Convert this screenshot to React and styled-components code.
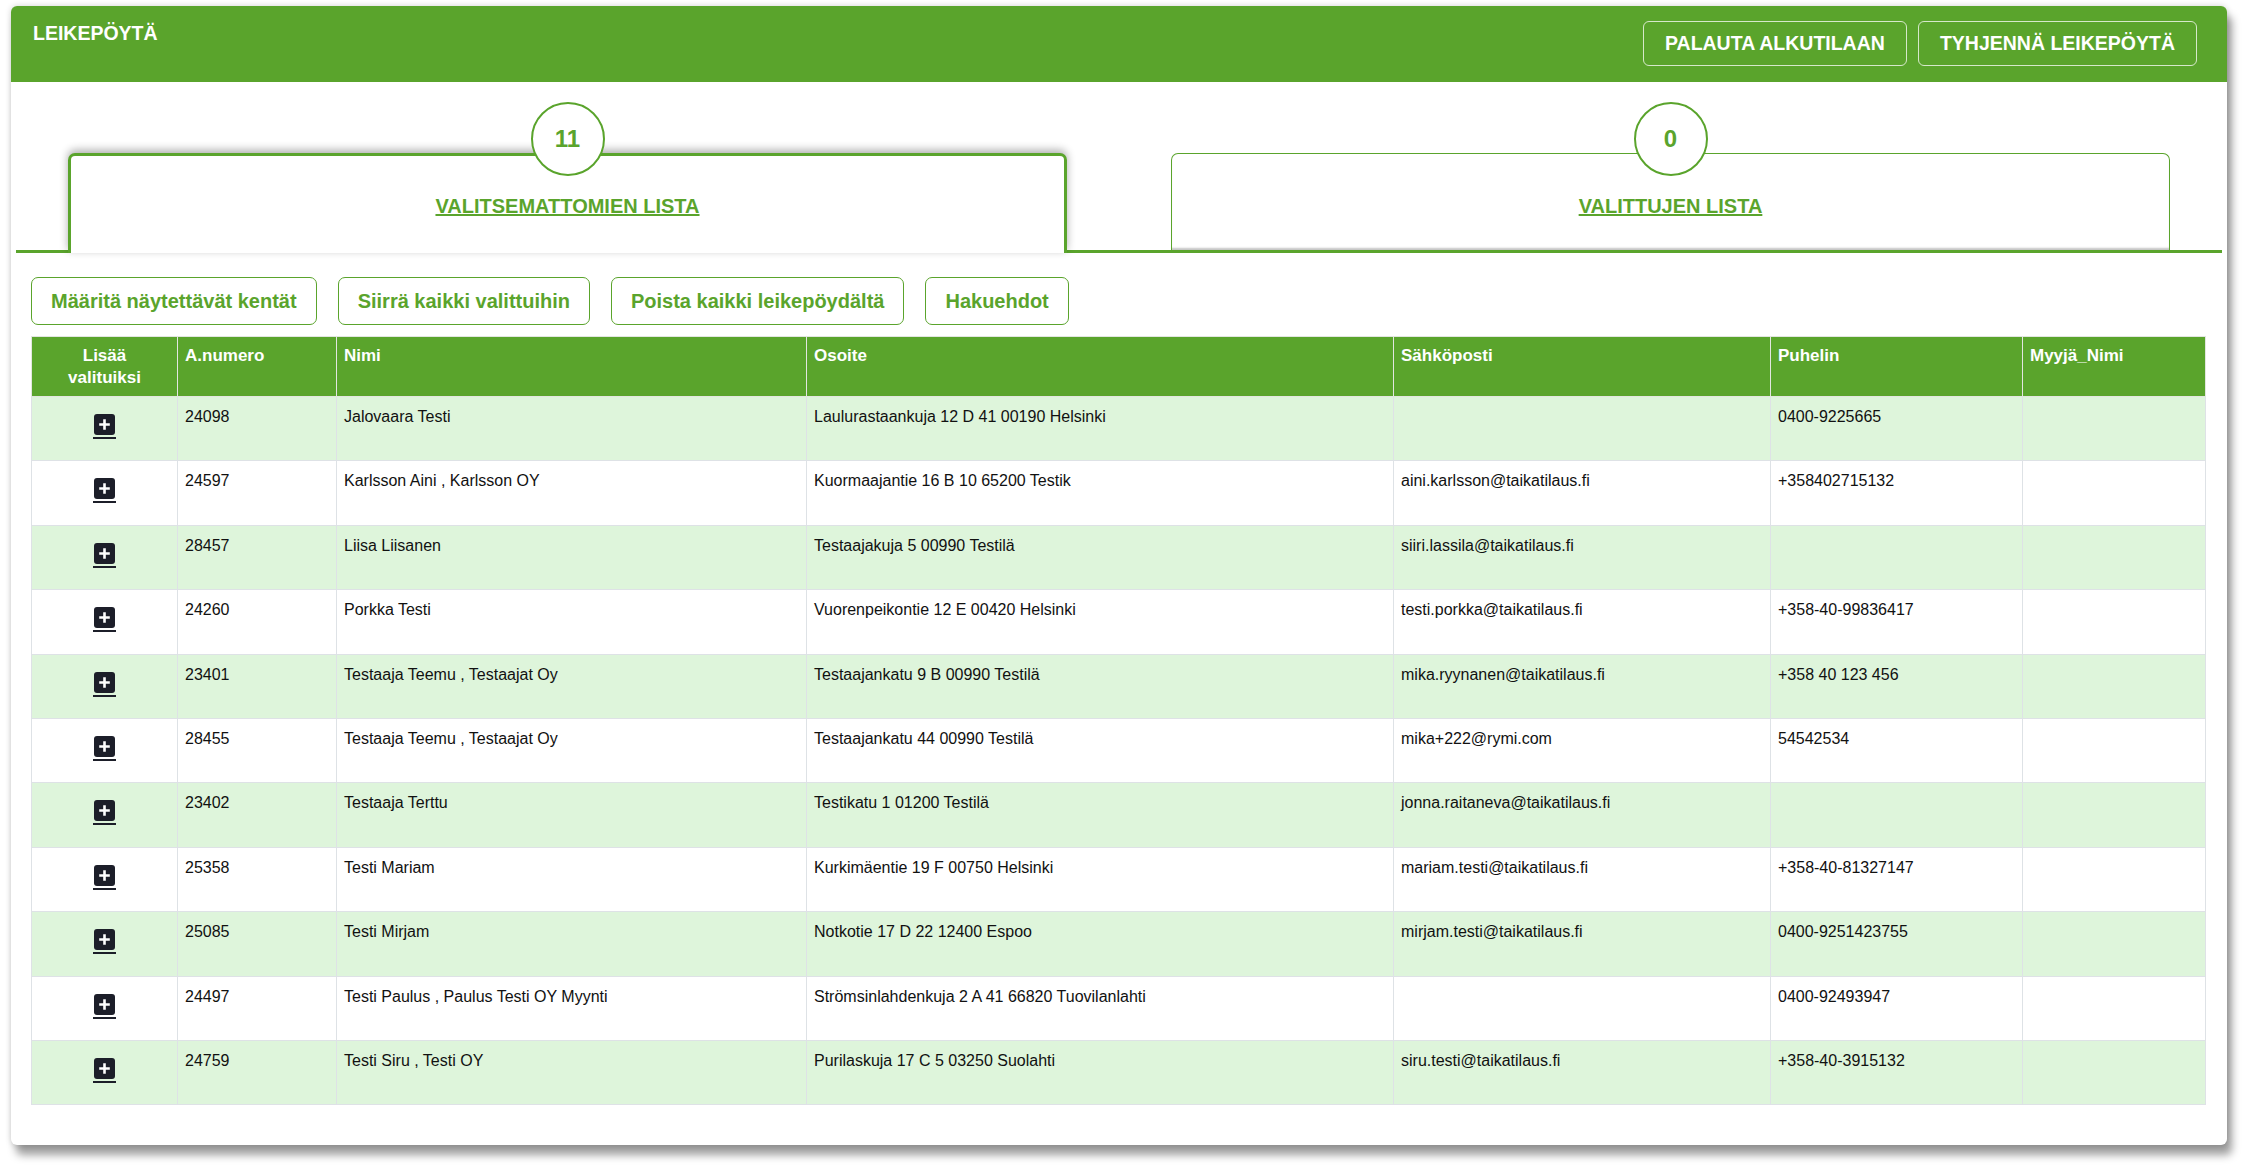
import React from "react";
import styled, { createGlobalStyle } from "styled-components";

const GREEN = "#5aa42c";

const GlobalStyle = createGlobalStyle`
  html, body { margin: 0; padding: 0; background: #ffffff; }
  body { font-family: "Liberation Sans", Arial, Helvetica, sans-serif; color: #111; }
  * { box-sizing: border-box; }
`;

const Page = styled.div`
  padding: 6px 15px 23px 11px;
`;

const Card = styled.div`
  background: #fff;
  border-radius: 6px;
  overflow: hidden;
  box-shadow: 5px 10px 8px rgba(0, 0, 0, 0.38), 0 0 6px rgba(0, 0, 0, 0.18);
`;

const Header = styled.div`
  background: ${GREEN};
  height: 76px;
  display: flex;
  align-items: flex-start;
  justify-content: space-between;
  padding: 15px 30px 0 22px;
`;

const Title = styled.h1`
  margin: 1px 0 0;
  font-size: 19.5px;
  font-weight: 700;
  color: #fff;
  line-height: 22px;
`;

const HeaderActions = styled.div`
  display: flex;
  gap: 11px;
`;

const HeaderButton = styled.button`
  height: 45px;
  padding: 0 21px;
  background: transparent;
  border: 1px solid rgba(255, 255, 255, 0.75);
  border-radius: 6px;
  color: #fff;
  font-family: inherit;
  font-size: 19.5px;
  font-weight: 700;
  text-transform: uppercase;
  cursor: pointer;
`;

const TabBar = styled.div`
  display: flex;
  margin: 0 5px;
  padding-top: 20px;
  border-bottom: 3px solid ${GREEN};
`;

const TabSlot = styled.div`
  flex: 1;
  position: relative;
  padding: 51px 52px 0;
  display: flex;
  flex-direction: column;
`;

const CountBadge = styled.div`
  position: absolute;
  top: 0;
  left: 50%;
  transform: translateX(-50%);
  width: 74px;
  height: 74px;
  border-radius: 50%;
  border: 2px solid ${GREEN};
  background: #fff;
  z-index: 2;
  display: flex;
  align-items: center;
  justify-content: center;
  color: ${GREEN};
  font-size: 24px;
  font-weight: 700;
`;

const Tab = styled.div`
  position: relative;
  z-index: 1;
  background: #fff;
  text-align: center;
  ${(p) =>
    p.$active
      ? `
    height: 100px;
    margin-bottom: -3px;
    border: 3px solid ${GREEN};
    border-bottom: none;
    border-radius: 7px 7px 0 0;
    padding-top: 39px;
    box-shadow: 0 -3px 9px rgba(0,0,0,0.32);
  `
      : `
    height: 97px;
    border: 1px solid ${GREEN};
    border-bottom: none;
    border-radius: 7px 7px 0 0;
    padding-top: 41px;
    box-shadow: inset 0 -3px 2px -1px #c4c4c4;
  `}
`;

const TabLabel = styled.a`
  font-size: 20px;
  line-height: 22px;
  font-weight: 700;
  color: ${GREEN};
  text-decoration: underline;
  text-transform: uppercase;
  cursor: pointer;
`;

const Content = styled.div`
  padding: 24px 22px 40px 20px;
`;

const Toolbar = styled.div`
  display: flex;
  gap: 21px;
  margin-bottom: 11px;
`;

const ActionButton = styled.button`
  height: 48px;
  padding: 0 19px;
  background: #fff;
  border: 1px solid ${GREEN};
  border-radius: 7px;
  color: ${GREEN};
  font-family: inherit;
  font-size: 20px;
  font-weight: 700;
  cursor: pointer;
`;

const Table = styled.table`
  width: 100%;
  table-layout: fixed;
  border-collapse: collapse;
  border: 1px solid #dee2e6;
`;

const Th = styled.th`
  background: ${GREEN};
  color: #fff;
  font-size: 17px;
  font-weight: 700;
  line-height: 22px;
  text-align: ${(p) => (p.$center ? "center" : "left")};
  vertical-align: top;
  padding: 8px 7px 6px;
  height: 60px;
  border: 1px solid #e2e6e0;
`;

const Row = styled.tr`
  height: 64.4px;
  background: ${(p) => (p.$odd ? "#def5db" : "#fff")};
`;

const Td = styled.td`
  font-size: 16px;
  line-height: 24px;
  color: #111;
  vertical-align: top;
  padding: 8px 7px 0;
  border: 1px solid #dee2e6;
  white-space: nowrap;
  overflow: hidden;
`;

const IconCell = styled(Td)`
  text-align: center;
  padding-top: 17px;
`;

const AddLink = styled.a`
  display: inline-flex;
  flex-direction: column;
  align-items: center;
  cursor: pointer;
  border-bottom: 2px solid #1c1e29;
  padding: 0 1px 2px;
  line-height: 0;
`;

const PlusIcon = () => (
  <svg width="21" height="21" viewBox="0 0 21 21">
    <rect x="0" y="0" width="21" height="21" rx="3" fill="#1c1e29" />
    <path d="M10.5 5.2v10.6M5.2 10.5h10.6" stroke="#fff" strokeWidth="2.6" />
  </svg>
);

const rows = [
  ["24098", "Jalovaara Testi", "Laulurastaankuja 12 D 41 00190 Helsinki", "", "0400-9225665", ""],
  ["24597", "Karlsson Aini , Karlsson OY", "Kuormaajantie 16 B 10 65200 Testik", "aini.karlsson@taikatilaus.fi", "+358402715132", ""],
  ["28457", "Liisa Liisanen", "Testaajakuja 5 00990 Testilä", "siiri.lassila@taikatilaus.fi", "", ""],
  ["24260", "Porkka Testi", "Vuorenpeikontie 12 E 00420 Helsinki", "testi.porkka@taikatilaus.fi", "+358-40-99836417", ""],
  ["23401", "Testaaja Teemu , Testaajat Oy", "Testaajankatu 9 B 00990 Testilä", "mika.ryynanen@taikatilaus.fi", "+358 40 123 456", ""],
  ["28455", "Testaaja Teemu , Testaajat Oy", "Testaajankatu 44 00990 Testilä", "mika+222@rymi.com", "54542534", ""],
  ["23402", "Testaaja Terttu", "Testikatu 1 01200 Testilä", "jonna.raitaneva@taikatilaus.fi", "", ""],
  ["25358", "Testi Mariam", "Kurkimäentie 19 F 00750 Helsinki", "mariam.testi@taikatilaus.fi", "+358-40-81327147", ""],
  ["25085", "Testi Mirjam", "Notkotie 17 D 22 12400 Espoo", "mirjam.testi@taikatilaus.fi", "0400-9251423755", ""],
  ["24497", "Testi Paulus , Paulus Testi OY Myynti", "Strömsinlahdenkuja 2 A 41 66820 Tuovilanlahti", "", "0400-92493947", ""],
  ["24759", "Testi Siru , Testi OY", "Purilaskuja 17 C 5 03250 Suolahti", "siru.testi@taikatilaus.fi", "+358-40-3915132", ""],
];

const colWidths = [146, 159, 470, 587, 377, 252, 183];
const headers = ["A.numero", "Nimi", "Osoite", "Sähköposti", "Puhelin", "Myyjä_Nimi"];

export default function App() {
  return (
    <>
      <GlobalStyle />
      <Page>
        <Card>
          <Header>
            <Title>LEIKEPÖYTÄ</Title>
            <HeaderActions>
              <HeaderButton>Palauta alkutilaan</HeaderButton>
              <HeaderButton>Tyhjennä leikepöytä</HeaderButton>
            </HeaderActions>
          </Header>

          <TabBar>
            <TabSlot>
              <CountBadge>11</CountBadge>
              <Tab $active>
                <TabLabel>Valitsemattomien lista</TabLabel>
              </Tab>
            </TabSlot>
            <TabSlot>
              <CountBadge>0</CountBadge>
              <Tab>
                <TabLabel>Valittujen lista</TabLabel>
              </Tab>
            </TabSlot>
          </TabBar>

          <Content>
            <Toolbar>
              <ActionButton>Määritä näytettävät kentät</ActionButton>
              <ActionButton>Siirrä kaikki valittuihin</ActionButton>
              <ActionButton>Poista kaikki leikepöydältä</ActionButton>
              <ActionButton>Hakuehdot</ActionButton>
            </Toolbar>

            <Table>
              <colgroup>
                {colWidths.map((w, i) => (
                  <col key={i} style={{ width: w }} />
                ))}
              </colgroup>
              <thead>
                <tr>
                  <Th $center>
                    Lisää
                    <br />
                    valituiksi
                  </Th>
                  {headers.map((h) => (
                    <Th key={h}>{h}</Th>
                  ))}
                </tr>
              </thead>
              <tbody>
                {rows.map((r, i) => (
                  <Row key={i} $odd={i % 2 === 0}>
                    <IconCell>
                      <AddLink>
                        <PlusIcon />
                      </AddLink>
                    </IconCell>
                    {r.map((c, j) => (
                      <Td key={j}>{c}</Td>
                    ))}
                  </Row>
                ))}
              </tbody>
            </Table>
          </Content>
        </Card>
      </Page>
    </>
  );
}
